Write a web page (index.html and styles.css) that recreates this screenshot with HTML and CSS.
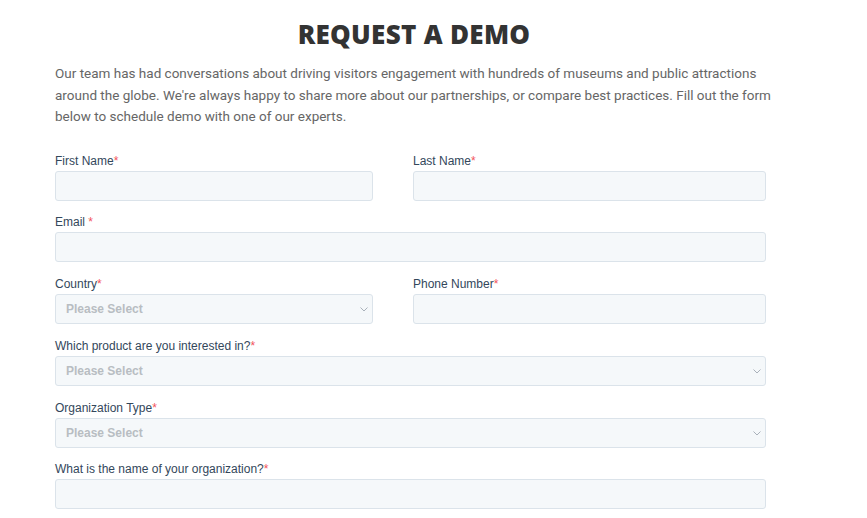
FILE: index.html
```html
<!DOCTYPE html>
<html lang="en">
<head>
<meta charset="utf-8">
<title>Request a Demo</title>
<link rel="stylesheet" href="styles.css">
</head>
<body>
<main class="page">
  <h1 class="title">REQUEST A DEMO</h1>
  <p class="intro">Our team has had conversations about driving visitors engagement with hundreds of museums and public attractions around the globe. We're always happy to share more about our partnerships, or compare best practices. Fill out the form below to schedule demo with one of our experts.</p>
  <form class="form">
    <div class="row two">
      <div class="field left">
        <label class="label">First Name<span class="req">*</span></label>
        <input class="input" type="text">
      </div>
      <div class="field right">
        <label class="label">Last Name<span class="req">*</span></label>
        <input class="input" type="text">
      </div>
    </div>
    <div class="row">
      <div class="field">
        <label class="label">Email <span class="req">*</span></label>
        <input class="input" type="email">
      </div>
    </div>
    <div class="row two">
      <div class="field left">
        <label class="label">Country<span class="req">*</span></label>
        <div class="select-wrap">
          <select class="input select"><option>Please Select</option></select>
          <svg class="chev" width="8" height="5" viewBox="0 0 8 5"><path d="M0.5 0.5 L4 4 L7.5 0.5" fill="none" stroke="#a9b1ba" stroke-width="1"/></svg>
        </div>
      </div>
      <div class="field right">
        <label class="label">Phone Number<span class="req">*</span></label>
        <input class="input" type="tel">
      </div>
    </div>
    <div class="row">
      <div class="field">
        <label class="label">Which product are you interested in?<span class="req">*</span></label>
        <div class="select-wrap">
          <select class="input select"><option>Please Select</option></select>
          <svg class="chev" width="8" height="5" viewBox="0 0 8 5"><path d="M0.5 0.5 L4 4 L7.5 0.5" fill="none" stroke="#a9b1ba" stroke-width="1"/></svg>
        </div>
      </div>
    </div>
    <div class="row">
      <div class="field">
        <label class="label">Organization Type<span class="req">*</span></label>
        <div class="select-wrap">
          <select class="input select"><option>Please Select</option></select>
          <svg class="chev" width="8" height="5" viewBox="0 0 8 5"><path d="M0.5 0.5 L4 4 L7.5 0.5" fill="none" stroke="#a9b1ba" stroke-width="1"/></svg>
        </div>
      </div>
    </div>
    <div class="row">
      <div class="field">
        <label class="label">What is the name of your organization?<span class="req">*</span></label>
        <input class="input" type="text">
      </div>
    </div>
  </form>
</main>
</body>
</html>
```
FILE: styles.css
```css
* { box-sizing: border-box; }
html, body { margin: 0; padding: 0; background: #fff; }
body { overflow: hidden; }
.page {
  width: 718px;
  margin-left: 55px;
  padding-top: 18px;
}
.title {
  margin: 0;
  text-align: center;
  font-family: "Open Sans", "DejaVu Sans", sans-serif;
  font-weight: 800;
  font-size: 26px;
  line-height: 32px;
  color: #333;
  letter-spacing: 0.3px;
}
.intro {
  margin: 13px 0 0 0;
  font-family: Roboto, "Liberation Sans", sans-serif;
  font-size: 13.5px;
  line-height: 21.5px;
  color: #666;
}
.form {
  width: 711px;
  margin-top: 25px;
  display: flex;
  flex-direction: column;
  gap: 13.8px;
}
.row { display: flex; }
.field { display: flex; flex-direction: column; flex: 1; }
.field.left { flex: 0 0 358px; }
.field.left .input, .field.left .select-wrap { width: 318px; }
.field.right { flex: 0 0 353px; }
.label {
  font-family: "Liberation Sans", Arial, sans-serif;
  font-size: 12px;
  line-height: 16px;
  height: 16px;
  color: #33475b;
  margin-bottom: 2px;
}
.req { color: #f2545b; }
.input {
  display: block;
  width: 100%;
  height: 30px;
  background: #f5f8fa;
  border: 1px solid #dbe3ea;
  border-radius: 3px;
  font-family: "Liberation Sans", Arial, sans-serif;
  font-size: 13px;
  color: #33475b;
  padding: 0 10px;
  margin: 0;
  outline: none;
}
.select-wrap { position: relative; width: 100%; }
.select {
  -webkit-appearance: none;
  appearance: none;
  color: #b8bdc2;
  font-weight: bold;
  font-size: 12px;
}
.chev {
  position: absolute;
  right: 5px;
  top: 13px;
  pointer-events: none;
}
```
